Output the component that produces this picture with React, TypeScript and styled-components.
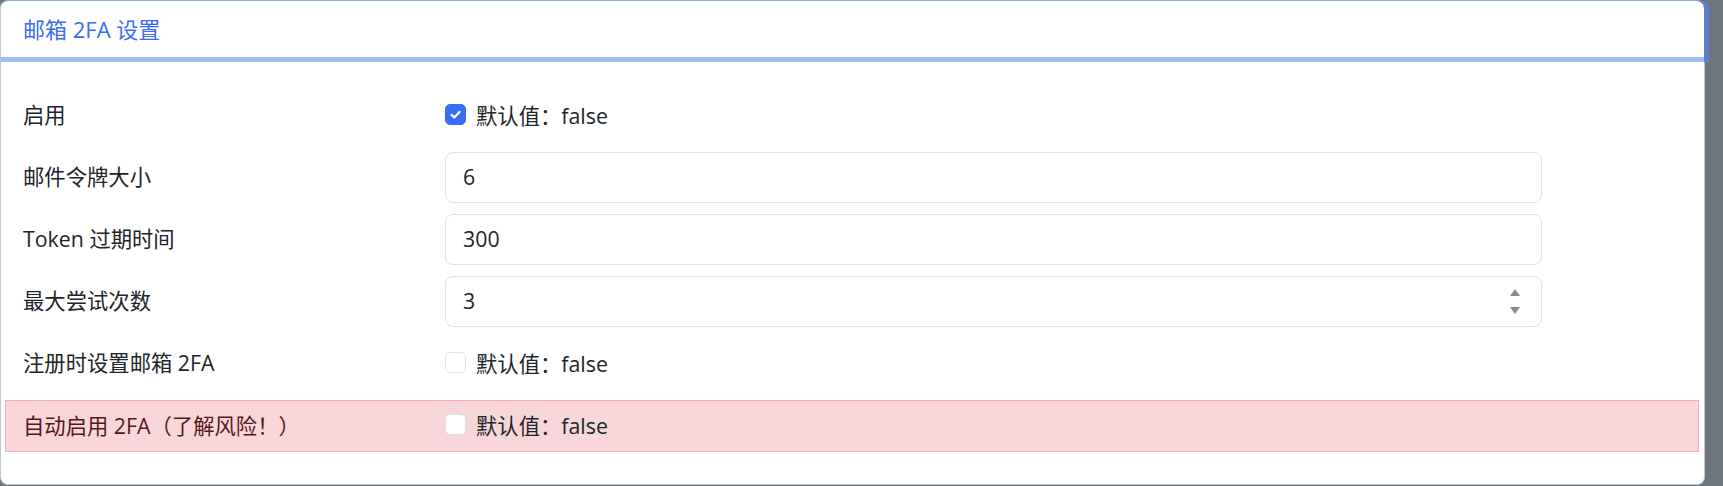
import React from "react";
import styled, { createGlobalStyle } from "styled-components";

const GlobalStyle = createGlobalStyle`
  html, body {
    margin: 0;
    padding: 0;
    background: #6c757d;
  }
  body {
    font-family: "Open Sans", "Noto Sans CJK SC", sans-serif;
    font-size: 21.33px;
    color: #212529;
  }
`;

const Card = styled.div`
  width: 1705px;
  box-sizing: border-box;
  background: #fff;
  border: 1px solid #c4c6c9;
  border-top-color: #87a5ea;
  border-radius: 8px;
`;

const Header = styled.div`
  height: 61px;
  box-sizing: border-box;
  padding: 0 22px 7px;
  display: flex;
  align-items: center;
  font-size: 22px;
  color: #3b6cf6;
  border-radius: 7px 7px 0 0;
  box-shadow: inset 0 -5px 0 #9fbdf9, 5px 0 0 0 #5d7fcf;
`;

const Body = styled.div`
  padding: 28px 5px 32px 4px;
  display: flex;
  flex-direction: column;
  gap: 11px;
`;

const Row = styled.div<{ $danger?: boolean }>`
  display: grid;
  grid-template-columns: ${(p) => (p.$danger ? "422px" : "422px")} 1097px;
  align-items: center;
  min-height: ${(p) => (p.$danger ? "50px" : "51px")};
  padding-left: ${(p) => (p.$danger ? "17px" : "18px")};
  background: ${(p) => (p.$danger ? "#f8d7da" : "transparent")};
  border: ${(p) => (p.$danger ? "1px solid #f1aeb5" : "none")};
  color: ${(p) => (p.$danger ? "#58151c" : "#212529")};
`;

const Label = styled.div`
  white-space: nowrap;
  padding-bottom: 4px;
`;

const CheckWrap = styled.label`
  display: flex;
  align-items: center;
  gap: 10px;
  padding-bottom: 3px;
  color: #212529;
`;

const Box = styled.span<{ $checked?: boolean }>`
  width: 21px;
  height: 21px;
  box-sizing: border-box;
  border-radius: 5px;
  background: ${(p) => (p.$checked ? "#3b6cf6" : "#fff")};
  border: 1px solid ${(p) => (p.$checked ? "#3b6cf6" : "#dee2e6")};
  display: flex;
  align-items: center;
  justify-content: center;
`;

const Field = styled.div`
  position: relative;
`;

const Input = styled.input`
  display: block;
  width: 1097px;
  height: 51px;
  box-sizing: border-box;
  padding: 0 17px 2px;
  border: 1px solid #dee2e6;
  border-radius: 8px;
  font: inherit;
  color: #212529;
  background: #fff;
  outline: none;
`;

const Spinner = styled.div`
  position: absolute;
  right: 22px;
  top: 13px;
  display: flex;
  flex-direction: column;
  gap: 11px;
`;

const Arrow = styled.span<{ $down?: boolean }>`
  width: 0;
  height: 0;
  border-left: 5px solid transparent;
  border-right: 5px solid transparent;
  ${(p) =>
    p.$down ? "border-top: 7px solid #8b8b8b;" : "border-bottom: 7px solid #8b8b8b;"}
`;

const Checkbox = ({ checked }: { checked?: boolean }) => (
  <CheckWrap>
    <Box $checked={checked}>
      {checked && (
        <svg width="13" height="13" viewBox="0 0 13 13">
          <path d="M2.5 6.8l2.8 2.7 5.2-5.6" fill="none" stroke="#fff" strokeWidth="2.2" strokeLinecap="round" strokeLinejoin="round" />
        </svg>
      )}
    </Box>
    默认值：false
  </CheckWrap>
);

export default function App() {
  return (
    <>
      <GlobalStyle />
      <Card>
        <Header>邮箱 2FA 设置</Header>
        <Body>
          <Row>
            <Label>启用</Label>
            <Checkbox checked />
          </Row>
          <Row>
            <Label>邮件令牌大小</Label>
            <Field>
              <Input readOnly defaultValue="6" />
            </Field>
          </Row>
          <Row>
            <Label>Token 过期时间</Label>
            <Field>
              <Input readOnly defaultValue="300" />
            </Field>
          </Row>
          <Row>
            <Label>最大尝试次数</Label>
            <Field>
              <Input readOnly defaultValue="3" />
              <Spinner>
                <Arrow />
                <Arrow $down />
              </Spinner>
            </Field>
          </Row>
          <Row>
            <Label>注册时设置邮箱 2FA</Label>
            <Checkbox />
          </Row>
          <Row $danger>
            <Label>自动启用 2FA（了解风险！）</Label>
            <Checkbox />
          </Row>
        </Body>
      </Card>
    </>
  );
}
